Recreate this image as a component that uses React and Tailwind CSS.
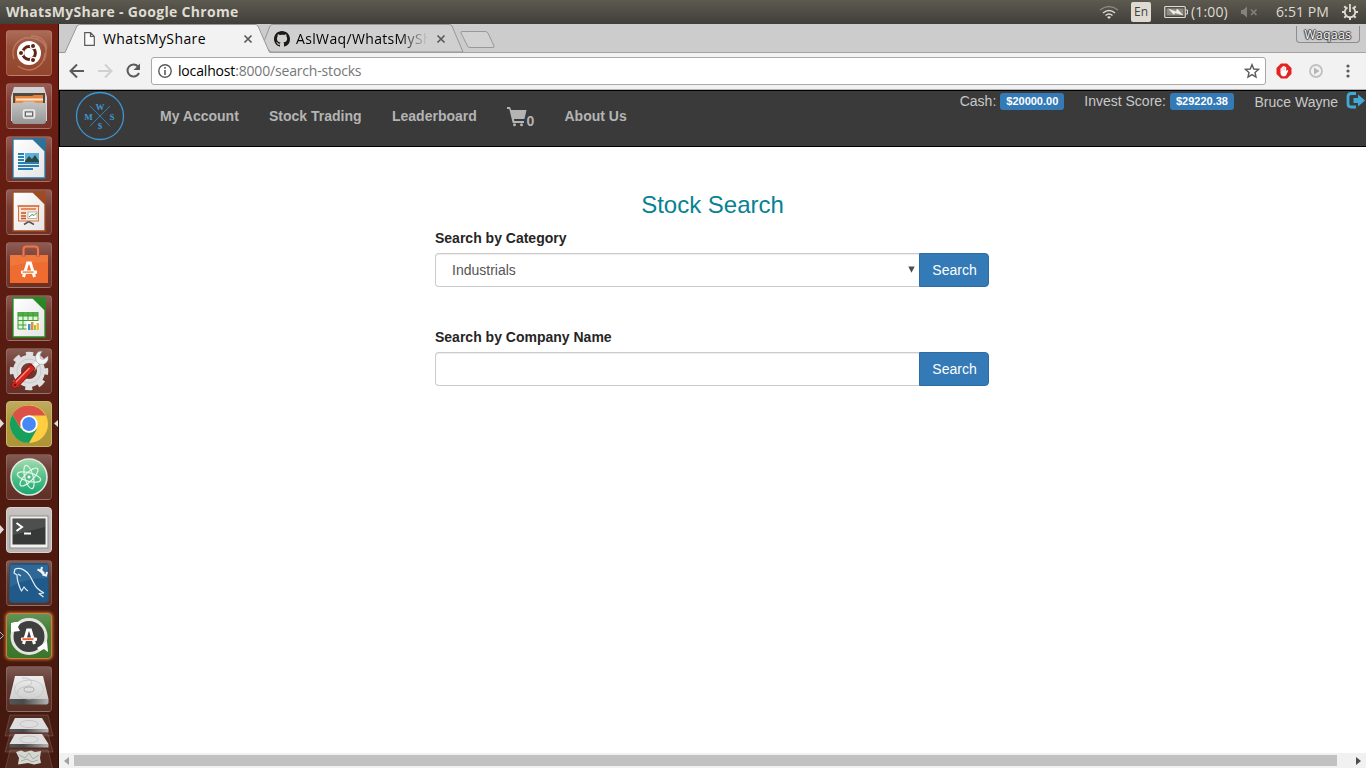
import React from "react";

function Tile({ children, bg = "bg-white/5", border = "border-white/15" }) {
  return (
    <div className={`h-[46px] w-[46px] shrink-0 overflow-hidden rounded-[4px] border bg-linear-to-b from-white/25 via-white/10 via-40% to-white/5 ${border} ${bg}`}>
      <svg viewBox="0 0 46 46" className="-ml-px -mt-px block h-[46px] w-[46px]">
        {children}
      </svg>
    </div>
  );
}

function Doc({ color, children }) {
  return (
    <>
      <path d="M7 3H27L39 15V42H7Z" fill="url(#paper)" stroke={color} strokeWidth="1.3" />
      <path d="M25 2H40V15Z" fill={color} opacity=".85" />
      {children}
    </>
  );
}

function DashA({ cx, cy, s = 1, accent = "#f2602b" }) {
  return (
    <g transform={`translate(${cx} ${cy}) scale(${s})`}>
      <path d="M-5.500 8L-1.400-6H1.400L5.500 8" fill="none" stroke="#fff" strokeWidth="3" />
      <rect x="-8" y="1.500" width="16" height="3.400" rx="1" fill="#fff" />
      <rect x="-6.500" y="2.200" width="11" height="2" fill={accent} />
    </g>
  );
}

function Disk() {
  return (
    <>
      <path d="M9 10H37L42.500 33H3.500Z" fill="url(#metal)" />
      <path d="M3.500 33H42.500V37L41 38.500H5L3.500 37Z" fill="url(#diskEdge)" />
      <ellipse cx="23" cy="23.500" rx="14.500" ry="9.500" fill="none" stroke="#c2c2c2" strokeWidth=".8" />
      <ellipse cx="23" cy="23.500" rx="5" ry="2.600" fill="#dedede" stroke="#999" strokeWidth=".8" />
      <path d="M16 12C22 11 29 16 24 19S12 20 11 28" fill="none" stroke="#bdbdbd" strokeWidth=".8" />
    </>
  );
}

function Launcher() {
  return (
    <aside className="relative flex h-full w-[59px] shrink-0 flex-col gap-[7px] overflow-hidden border-r border-[#2d0d08] bg-linear-to-b from-[#741e13] via-[#571b10] via-45% to-[#43180e] pl-[6px] pt-[6px]">
      <svg className="absolute h-0 w-0">
        <defs>
          <linearGradient id="paper" x1="0" y1="0" x2="1" y2="1">
            <stop offset="0" stopColor="#fff" />
            <stop offset="1" stopColor="#e4e4e4" />
          </linearGradient>
          <linearGradient id="metal" x1="0" y1="0" x2="0" y2="1">
            <stop offset="0" stopColor="#eee" />
            <stop offset="1" stopColor="#cfcfcf" />
          </linearGradient>
          <linearGradient id="diskEdge" x1="0" y1="0" x2="1" y2="0">
            <stop offset="0" stopColor="#555" />
            <stop offset=".35" stopColor="#4a4a4a" />
            <stop offset="1" stopColor="#b5b5b5" />
          </linearGradient>
          <linearGradient id="cabinet" x1="0" y1="0" x2="0" y2="1">
            <stop offset="0" stopColor="#c4c4c4" />
            <stop offset="1" stopColor="#969696" />
          </linearGradient>
          <linearGradient id="atom" x1="0" y1="0" x2="0" y2="1">
            <stop offset="0" stopColor="#a5dcb0" />
            <stop offset=".5" stopColor="#55bf88" />
            <stop offset="1" stopColor="#16a672" />
          </linearGradient>
        </defs>
      </svg>
      <Tile bg="bg-[#8e3c22]">
        <path d="M8 29C4 17 13 6 26 8S43 18 38 31M12 36C25 45 38 37 39 23M25 6C37 6 42 14 40 21" fill="none" stroke="#c98a73" strokeWidth="1.5" opacity=".65" />
        <circle cx="23" cy="23" r="12" fill="#fff" />
        <circle cx="23" cy="23" r="6.4" fill="none" stroke="#5e2414" strokeWidth="3" />
        <g stroke="#fff" strokeWidth="1.2" fill="#5e2414">
          <circle cx="15" cy="23" r="2.6" /><circle cx="27" cy="16" r="2.6" /><circle cx="27" cy="30" r="2.6" />
        </g>
      </Tile>
      <Tile>
        <path d="M8 4H38L41 14V38H5V14Z" fill="#d3d3d3" />
        <path d="M7 10H39V21H7Z" fill="#55483f" />
        <path d="M9 13H26L28 12H37V20H9Z" fill="#e8823a" />
        <path d="M10 15.500H37V18H10Z" fill="#fbe8cc" />
        <path d="M10 17.500H37V21H10Z" fill="#e98d4b" />
        <path d="M6 20H16L18 18.500H28L30 20H40V38Q40 41 37 41H9Q6 41 6 38Z" fill="url(#cabinet)" />
        <rect x="17.500" y="27" width="11" height="8" rx="1.500" fill="none" stroke="#eee" strokeWidth="1.600" />
        <rect x="19.500" y="29" width="7" height="4" fill="#eee" stroke="#666" />
      </Tile>
      <Tile>
        <Doc color="#2376a6">
          <path d="M12 18H18M12 21H18M12 24H18M12 27H33M12 30H33M12 33H27" stroke="#2a7fb4" strokeWidth="1.8" />
          <rect x="19" y="17" width="14" height="9" fill="#5aaee0" />
          <path d="M19 25L23 20L26 23L29 19L33 25V26H19Z" fill="#2e4a3c" />
        </Doc>
      </Tile>
      <Tile>
        <Doc color="#a04a1c">
          <rect x="12.500" y="17" width="20" height="15" fill="#fbe3d5" stroke="#d9713f" />
          <path d="M11.500 17H33.500M15 20H30" stroke="#d9713f" strokeWidth="1.500" />
          <path d="M15 24H20M15 27H20M15 29.500H20" stroke="#b65a30" strokeWidth="1.300" />
          <rect x="22" y="23" width="9" height="6.500" fill="#fff" stroke="#9a9a9a" strokeWidth=".7" />
          <path d="M23 28L26 25.500L28 26.500L30.500 24" fill="none" stroke="#3b9b3b" />
          <path d="M18 35.500L22 33H23.500L28 35.500" fill="none" stroke="#555" strokeWidth="1.500" />
        </Doc>
      </Tile>
      <Tile>
        <path d="M4 13H42V41H4Z" fill="#ee6c30" />
        <path d="M4 13H42V20Q24 20 4 24Z" fill="#f5925a" opacity=".3" />
        <path d="M4 41H42V42.500H4Z" fill="#7a2d10" />
        <path d="M17.500 14.500V7.500Q17.500 4.500 20.500 4.500H29Q32 4.500 32 7.500V14.500" fill="none" stroke="#b4482a" strokeWidth="3.400" />
        <path d="M17.500 14.500V7.500Q17.500 4.500 20.500 4.500H29Q32 4.500 32 7.500V14.500" fill="none" stroke="#e07a5a" strokeWidth="2" />
        <DashA cx="23" cy="27" accent="#f29a63" />
      </Tile>
      <Tile>
        <Doc color="#1e8f1e">
          <rect x="12" y="17" width="20" height="17" fill="#dff3d9" />
          <path d="M12 17H32V21H12Z" fill="#4fae45" />
          <path d="M12 17V34H32V17M12 21H32M12 25.500H32M12 30H32M17 17V34M22 17V34M27 17V34" fill="none" stroke="#3c9f35" />
          <rect x="20.500" y="26" width="13" height="9" fill="#fff" />
          <path d="M22 35V29H24.500V35Z" fill="#3e91cf" /><path d="M25 35V27H27.500V35Z" fill="#e98c3a" /><path d="M28 35V30H30V35Z" fill="#9ac93a" /><path d="M30.500 35V28H33V35Z" fill="#f0bd38" />
        </Doc>
      </Tile>
      <Tile>
        <circle cx="23" cy="23" r="12" fill="none" stroke="#dedede" strokeWidth="8" />
        <circle cx="23" cy="23" r="17" fill="none" stroke="#dedede" strokeWidth="4.500" strokeDasharray="7.100 6.250" strokeDashoffset="3.500" />
        <circle cx="23" cy="23" r="12" fill="none" stroke="#c4c4c4" strokeWidth=".8" />
        <path d="M26 21L34 13" stroke="#b4b4b4" strokeWidth="6" />
        <path d="M25 21L34 12" stroke="#f3f3f3" strokeWidth="4.500" />
        <path d="M36 3L32 4Q28 8 30 13L33 16Q39 18 42 12L42 8L37.500 11.500L34.500 10.500L34 7Z" fill="#f3f3f3" stroke="#a0a0a0" strokeWidth=".6" />
        <path d="M9 37L25 20.500" stroke="#8e1110" strokeWidth="7.500" strokeLinecap="round" />
        <path d="M9 37L25 20.500" stroke="#d3261f" strokeWidth="5.800" strokeLinecap="round" />
        <path d="M10 34L23.500 20" stroke="#f2938c" strokeWidth="1.200" />
        <circle cx="9" cy="37" r="1.300" fill="#781210" />
      </Tile>
      <Tile bg="bg-[#a98f2c]" border="border-[#c9b66c]">
        <circle cx="23" cy="23" r="19" fill="#ffcd40" />
        <path d="M6.500 13.500A19 19 0 0 0 23 42L31 28L23 32L14.800 27.500Z" fill="#17a05d" />
        <path d="M6.500 13.500A19 19 0 0 1 39.500 14.500H23L14 26Z" fill="#dc5147" />
        <circle cx="23" cy="23" r="8.700" fill="#fff" />
        <circle cx="23" cy="23" r="6.900" fill="#4688f4" />
      </Tile>
      <Tile>
        <circle cx="23" cy="23" r="18" fill="url(#atom)" stroke="#e2e9e3" strokeWidth="1.600" />
        <g fill="none" stroke="#dff6e8" strokeWidth="1.200">
          <ellipse cx="23" cy="23" rx="12" ry="4.200" transform="rotate(15 23 23)" />
          <ellipse cx="23" cy="23" rx="12" ry="4.200" transform="rotate(75 23 23)" />
          <ellipse cx="23" cy="23" rx="12" ry="4.200" transform="rotate(-45 23 23)" />
        </g>
        <circle cx="23" cy="23" r="1.500" fill="#fff" />
      </Tile>
      <Tile bg="bg-[#b5b1ae]" border="border-[#d6d3d0]">
        <rect x="4" y="9" width="38" height="32" fill="#f0f0ef" stroke="#918e8b" />
        <rect x="6.500" y="11.500" width="33" height="26" fill="#363938" />
        <path d="M7 12H39V20L7 28Z" fill="#626563" opacity=".5" />
        <path d="M10.500 16L16 20L10.500 24M18 26.500H25" fill="none" stroke="#fff" strokeWidth="2" />
      </Tile>
      <Tile>
        <rect x="3.500" y="3.500" width="39" height="39" rx="3" fill="#205a8a" stroke="#2b4f70" />
        <path d="M4 5H42V18Q20 18 4 27Z" fill="#447cab" opacity=".4" />
        <path d="M9 9C15 7 21 11 24 16C27 21 28 25 31 28Q34 31 38 33M38 33L33 33.500L37.500 37M9 9L8 13L11 15C11 20 12 23 14 28L15.500 31L18 27Q20 30 22 31M12 14L15 16" fill="none" stroke="#e2eff7" strokeWidth="1.200" strokeLinejoin="round" />
        <path d="M34 10L38 14" stroke="#eff4f7" strokeWidth="3" /><path d="M31.500 9.500L35 11L36 7M36.500 14.500L40 15.500L41 12" fill="none" stroke="#eff4f7" strokeWidth="2" />
      </Tile>
      <Tile bg="bg-[#2f6f20] shadow-[0_0_3px_1px_#c9652c]" border="border-[#ca823c]">
        <circle cx="23" cy="23.500" r="17" fill="#3f3f3d" stroke="#e5e5e1" strokeWidth="3" />
        <path d="M5 10L9 9L15 9L12 14L14 18L5 19Z" fill="#fff" />
        <path d="M41 28L42 39L38 36L34 38L31 35L34 33Z" fill="#fff" />
        <DashA cx="23" cy="23" />
      </Tile>
      <Tile><Disk /></Tile>
      <svg viewBox="0 0 59 56" className="-ml-[6px] -mt-[5px] block h-[56px] w-[59px] shrink-0">
        <g fill="#fff" fillOpacity=".08" stroke="#fff" strokeOpacity=".15"><path d="M10 1H48L53 22H5Z" /><path d="M10 20H48L53 38H5Z" /><path d="M10 36H48L53 56H5Z" /></g>
        <path d="M15 4H42L48.500 15H9.500Z" fill="#dedede" /><path d="M9.500 15H48.500V18.500H9.500Z" fill="url(#diskEdge)" />
        <ellipse cx="29" cy="10" rx="9" ry="3.500" fill="none" stroke="#bcbcbc" strokeWidth=".8" />
        <path d="M15 20H42L48.500 30H9.500Z" fill="#dedede" /><path d="M9.500 30H48.500V33.500H9.500Z" fill="url(#diskEdge)" />
        <ellipse cx="29" cy="25.500" rx="9" ry="3.500" fill="none" stroke="#bcbcbc" strokeWidth=".8" />
        <path d="M16 38L21 36.500L25 38L31 36.500L35 38L41 37L40 44L41 49L34 50.500L28 49L18 50.500L19 44Z" fill="#d5d7d2" />
        <path d="M19 41L25 44L29 39L33 45L39 41M21 47L27 45L32 48L38 46" fill="none" stroke="#a5aaa2" />
      </svg>
      <svg viewBox="0 0 59 768" className="pointer-events-none absolute left-0 top-[-24px] h-[768px] w-[59px]">
        <path d="M0 419L4 423.500L0 428ZM59 419L54 423.500L59 428ZM0 525L4 529.500L0 534Z" fill="#dedddc" />
        <path d="M0 632L3.500 635.500L0 639" fill="none" stroke="#8ec0df" />
      </svg>
    </aside>
  );
}

function TopPanel() {
  return (
    <header className="flex h-6 shrink-0 items-center bg-linear-to-b from-[#5d5a50] to-[#403f3a] pl-[6px] font-['Open_Sans','Noto_Sans',sans-serif] text-[#dfdbd2]">
      <h1 className="w-[1093px] whitespace-nowrap text-[14px] font-bold leading-6 tracking-[0.31px]">WhatsMyShare - Google Chrome</h1>
      <svg viewBox="0 0 20 16" className="h-4 w-5 shrink-0" fill="none" strokeWidth="1.5">
        <path d="M1 6Q10-1 19 6" stroke="#898780" /><path d="M4 9Q10 4 16 9M6.500 11.500Q10 8.500 13.500 11.500" stroke="#dfdbd2" /><path d="M8 13L10 15L12 13Q10 11.500 8 13" fill="#dfdbd2" />
      </svg>
      <div className="ml-3 flex h-5 w-5 shrink-0 items-center justify-center rounded-[2px] bg-[#dfdbd2] text-[12px] font-medium text-[#44423c]">En</div>
      <svg viewBox="0 0 25 14" className="ml-[13px] h-[14px] w-[25px] shrink-0">
        <rect x=".75" y="1.500" width="20.500" height="11" rx="1" fill="none" stroke="#dfdbd2" strokeWidth="1.200" /><path d="M22 5H23.500V9H22" fill="none" stroke="#dfdbd2" />
        <rect x="2.500" y="3.500" width="17" height="7" fill="#8f8c84" /><path d="M4 3.500L12 6.500L13 3.500L19.500 10.500L11 8L10 10Z" fill="#eeebe4" />
      </svg>
      <span className="ml-[2px] w-[49px] whitespace-nowrap pb-px text-[14px] tracking-[0.15px]">(1:00)</span>
      <svg viewBox="0 0 18 14" className="h-[14px] w-[18px] shrink-0">
        <path d="M1 5H3L7 1.500V12.500L3 9H1Z" fill="#85837b" /><path d="M11 4.500L16.500 10M16.500 4.500L11 10" stroke="#85837b" strokeWidth="1.500" />
      </svg>
      <span className="ml-[18px] w-[65px] whitespace-nowrap pb-px text-[14px] tracking-[0.1px]">6:51 PM</span>
      <svg viewBox="0 0 18 18" className="h-[18px] w-[18px] shrink-0" fill="none" stroke="#dfdbd2">
        <path d="M6.500 4.500A5.200 5.200 0 1 0 11.500 4.500M9 1V9" strokeWidth="1.800" />
        <path d="M1 9H4M14 9H17M3.300 3.300L5.300 5.300M14.700 3.300L12.700 5.300M3.300 14.700L5.300 12.700M14.700 14.700L12.700 12.700M9 14V17" strokeWidth="2" />
      </svg>
    </header>
  );
}

function CloseIcon() {
  return <svg viewBox="0 0 10 10" className="h-[10px] w-[10px] shrink-0"><path d="M1.500 1.500L8.500 8.500M8.500 1.500L1.500 8.500" stroke="#5a5a5a" strokeWidth="1.700" /></svg>;
}

function TabStrip() {
  return (
    <div className="relative flex h-[29px] shrink-0 bg-[#ccc] font-['Open_Sans','Noto_Sans',sans-serif] text-[14px] text-black">
      <svg viewBox="0 0 1307 29" className="absolute inset-0 h-[29px] w-[1307px]">
        <path d="M0 28.500H1307" stroke="#a3a3a3" />
        <path d="M204 20L211 2Q212 .5 213 .5H390Q392 .5 393 2L404 28H212Z" fill="#d0d0d0" stroke="#979797" />
        <path d="M6 29L18 2Q19 .5 21 .5H196Q198 .5 199 2L211 29Z" fill="#f2f2f2" />
        <path d="M0 28.500H6L18 2Q19 .5 21 .5H196Q198 .5 199 2L210.500 28.500" fill="none" stroke="#979797" />
        <path d="M403 7.500H426Q428 7.500 429 9L435 22Q435.500 23.500 434 23.500H411Q409 23.500 408.500 22L402 9Q401.500 7.500 403 7.500Z" fill="#d2d2d2" stroke="#999" />
      </svg>
      <div className="relative flex w-[211px] items-center pl-[25px]">
        <svg viewBox="0 0 11 14" className="h-[14px] w-[11px] shrink-0"><path d="M.7.7H6.500L10.300 4.500V13.300H.7ZM6.500.7V4.500H10.300" fill="#fafafa" stroke="#5a5a5a" strokeWidth="1.200" /></svg>
        <span className="ml-2 w-[140px] whitespace-nowrap tracking-[0.4px]">WhatsMyShare</span>
        <CloseIcon />
      </div>
      <div className="relative flex items-center pl-1">
        <svg viewBox="0 0 16 16" className="h-4 w-4 shrink-0"><path d="M8 0C3.580 0 0 3.580 0 8c0 3.540 2.290 6.530 5.470 7.590.4.070.55-.17.55-.38V13.720c-2.230.48-2.690-1.070-2.690-1.070-.36-.93-.89-1.180-.89-1.180-.73-.5.050-.49.050-.49.81.06 1.230.83 1.230.83.72 1.230 1.880.87 2.340.66.07-.52.28-.87.51-1.070-1.780-.2-3.640-.89-3.640-3.950 0-.87.31-1.590.82-2.150-.08-.2-.36-1.020.08-2.120 0 0 .67-.21 2.200.82A7.600 7.600 0 0 1 8 3.730c.68 0 1.360.09 2 .27 1.530-1.040 2.200-.82 2.200-.82.44 1.100.16 1.920.08 2.120.51.56.82 1.270.82 2.150 0 3.070-1.870 3.750-3.650 3.950.29.25.54.73.54 1.480v2.330c0 .21.15.46.55.38A8 8 0 0 0 16 8c0-4.420-3.580-8-8-8Z" fill="#1b1817" /></svg>
        <div className="ml-[6px] w-[132px] overflow-hidden whitespace-nowrap bg-linear-to-r from-black from-78% to-transparent bg-clip-text text-transparent tracking-[0.35px]">AslWaq/WhatsMySh</div>
        <span className="ml-[8px] flex"><CloseIcon /></span>
      </div>
      <div className="relative ml-auto mr-[6px] mt-[2px] flex h-[17px] w-[64px] items-center justify-center rounded-b-[4px] border border-t-0 border-[#8d8d8d] pt-px text-[12px] tracking-[0.5px] text-white [text-shadow:1px_0_1px_#333,-1px_0_1px_#333,0_1px_1px_#333,0_-1px_1px_#333]">Waqaas</div>
    </div>
  );
}

function Toolbar() {
  return (
    <div className="flex h-[37px] shrink-0 items-center border-b border-[#b6b4b6] bg-[#f2f2f2] font-['Open_Sans','Noto_Sans',sans-serif]">
      <svg viewBox="0 0 92 36" className="h-9 w-[92px] shrink-0" fill="none" strokeWidth="2">
        <path d="M25 18H12M18 11.500L11.500 18L18 24.500" stroke="#5a5a5a" />
        <path d="M39 18H52M46 11.500L52.500 18L46 24.500" stroke="#d0d0d0" />
        <path d="M79 13.500A6 6 0 1 0 80 20" stroke="#5a5a5a" /><path d="M81 10.500V17H74.500Z" fill="#5a5a5a" />
      </svg>
      <div className="flex h-7 w-[1115px] items-center rounded-[3px] border border-[#a9a9a9] bg-white pl-[6px] text-[14px]">
        <svg viewBox="0 0 14 14" className="h-[14px] w-[14px] shrink-0"><circle cx="7" cy="7" r="6.200" fill="none" stroke="#5a5a5a" strokeWidth="1.400" /><path d="M7 6V11M7 3V4.800" stroke="#5a5a5a" strokeWidth="1.600" /></svg>
        <span className="ml-[6px] whitespace-nowrap pb-px text-black tracking-[-0.17px]">localhost<span className="text-[#777]">:8000/search-stocks</span></span>
        <svg viewBox="0 0 16 16" className="ml-auto mr-[5px] h-4 w-4"><path d="M8 1.700L9.800 6L14.500 6.400L11 9.500L12 14L8 11.600L4 14L5 9.500L1.500 6.400L6.200 6Z" fill="none" stroke="#5a5a5a" strokeWidth="1.400" /></svg>
      </div>
      <svg viewBox="0 0 16 16" className="ml-[10px] h-4 w-4 shrink-0"><path d="M5 .5H11L15.500 5V11L11 15.500H5L.5 11V5Z" fill="#e32222" /><path d="M4.500 5.500Q5 4.500 5.700 5.300V4Q6.400 3 7.200 4V3.300Q8 2.400 8.700 3.300V4Q9.500 3.300 10.200 4.300V8L11.500 7Q12.600 7 12 8.200L10 12.500Q9.700 13.300 8.500 13.300H6.500Q4.500 12.500 4.500 10Z" fill="#fff" /><path d="M5.900 5V8M7.300 4V7.500M8.700 4V7.500" stroke="#e98a8a" strokeWidth=".4" /></svg>
      <svg viewBox="0 0 14 14" className="ml-[17px] h-[14px] w-[14px] shrink-0"><circle cx="7" cy="7" r="6" fill="none" stroke="#c1c1c1" strokeWidth="1.800" /><path d="M5 3.600L10.500 7L5 10.400Z" fill="#b5b5b5" /></svg>
      <svg viewBox="0 0 4 14" className="ml-[23px] h-[14px] w-1"><g fill="#5a5a5a"><circle cx="2" cy="2" r="1.600" /><circle cx="2" cy="7" r="1.600" /><circle cx="2" cy="12" r="1.600" /></g></svg>
    </div>
  );
}

function Money({ children }) {
  return <span className="ml-1 mt-[2px] flex h-[17px] w-16 items-center justify-center rounded-[3px] bg-[#337ab7] text-[11px] font-bold leading-none text-white">{children}</span>;
}

function Nav() {
  return (
    <nav className="flex h-[57px] shrink-0 items-start border border-r-0 border-black bg-[#3a3a3a] text-[14px] leading-5 text-[#b4b4b4]">
      <svg viewBox="0 0 50 50" className="ml-[15px] h-[50px] w-[50px] shrink-0">
        <circle cx="25" cy="25" r="23.500" fill="none" stroke="#3c97d4" strokeWidth="1.300" />
        <path d="M15 15L35 35M35 15L15 35" stroke="#367ead" strokeWidth="1" />
        <g fill="#3c97d4" fontFamily="Liberation Serif, serif" fontWeight="bold" fontSize="9" textAnchor="middle"><text x="25" y="18.500">W</text><text x="13.500" y="28.500">M</text><text x="37" y="28.500">S</text><text x="25" y="38">$</text></g>
      </svg>
      <div className="ml-[35px] mt-[15px] flex whitespace-nowrap font-bold">
        <a className="w-[109px]">My Account</a><a className="w-[123px]">Stock Trading</a><a className="w-[115px]">Leaderboard</a>
        <a className="flex w-[57.5px]"><svg viewBox="0 0 20 20" className="mt-px h-5 w-5"><path d="M0 0H3L4.200 3H19.500L17.500 12H7L7.300 14H17V16H5.700L2.300 2H0Z" fill="#b4b4b4" /><circle cx="7.500" cy="17.800" r="1.500" fill="#b4b4b4" /><circle cx="14.500" cy="17.800" r="1.500" fill="#b4b4b4" /></svg><span className="-ml-[0.5px] mt-[5px]">0</span></a>
        <a>About Us</a>
      </div>
      <div className="ml-auto flex items-start whitespace-nowrap text-[#c8c8c8]">
        <div className="flex items-start"><span>Cash:</span><Money>$20000.00</Money></div>
        <div className="ml-5 flex items-start"><span>Invest Score:</span><Money>$29220.38</Money></div>
        <span className="ml-[20.5px] mt-px">Bruce Wayne</span>
        <svg viewBox="0 0 19 17" className="ml-2 mr-px mt-px h-[17px] w-[19px]"><path d="M10 1.500H5Q2 1.500 2 4.500V12Q2 15 5 15H10" fill="none" stroke="#42a9d5" strokeWidth="2.800" /><path d="M7.500 6H12V2.500L19 8.500L12 14.500V11H7.500Z" fill="#42a9d5" /></svg>
      </div>
    </nav>
  );
}

function Field({ label, children }) {
  return (
    <div>
      <label className="mb-[5px] block font-bold leading-5 text-[#252525]">{label}</label>
      <div className="flex h-[34px]">
        <div className="flex w-[484px] items-center rounded-l-[4px] border border-r-0 border-[#ccc] bg-white pl-4 pr-1 text-[#555] shadow-[inset_0_1px_1px_rgba(0,0,0,.075)]">{children}</div>
        <button className="w-[70px] rounded-r-[4px] border border-[#2e6da4] bg-[#337ab7] pl-px text-[14px] text-white">Search</button>
      </div>
    </div>
  );
}

export default function App() {
  return (
    <div className="flex h-[768px] w-[1366px] flex-col overflow-hidden bg-white">
      <TopPanel />
      <div className="flex h-[744px]">
        <Launcher />
        <main className="flex w-[1307px] flex-col font-['Liberation_Sans',Arial,sans-serif] text-[14px]">
          <TabStrip />
          <Toolbar />
          <Nav />
          <section className="flex-1 pl-[376px] pt-[45px]">
            <div className="w-[554px]">
              <h2 className="mb-[10px] pl-px text-center text-[24px] leading-[26px] text-[#078292]">Stock Search</h2>
              <div className="flex flex-col gap-10">
                <Field label="Search by Category"><span>Industrials</span><svg viewBox="0 0 7 7" className="mb-px ml-auto h-[7px] w-[7px]"><path d="M.3.500H6.700L3.500 6.700Z" fill="#4d4d4d" /></svg></Field>
                <Field label="Search by Company Name" />
              </div>
            </div>
          </section>
          <div className="flex h-[15px] shrink-0 items-center justify-between bg-[#f1f1f1] px-[5px]">
            <svg viewBox="0 0 5 8" className="h-2 w-[5px]"><path d="M5 0V8L0 4Z" fill="#a0a0a0" /></svg>
            <div className="ml-[5px] mr-auto h-[11px] w-[1263px] bg-[#c1c1c1]" />
            <svg viewBox="0 0 5 8" className="h-2 w-[5px]"><path d="M0 0V8L5 4Z" fill="#4d4d4d" /></svg>
          </div>
        </main>
      </div>
    </div>
  );
}
